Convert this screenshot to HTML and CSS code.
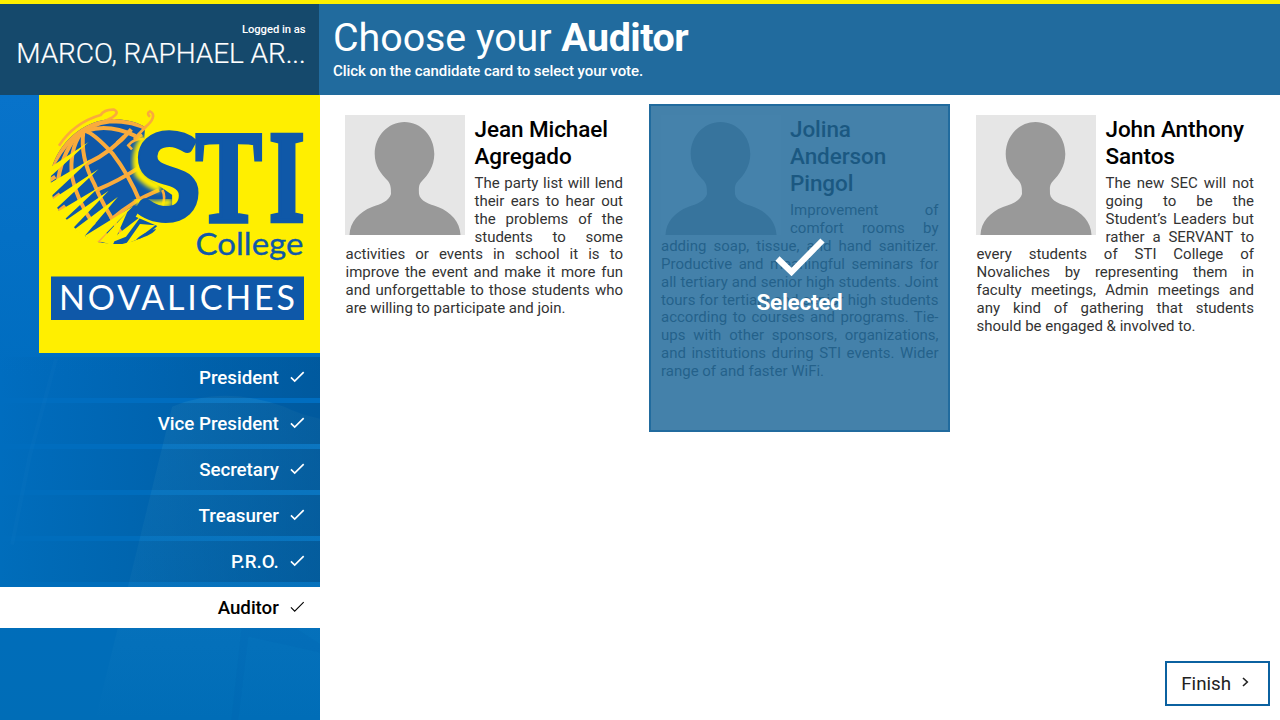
FILE: index.html
```html
<!DOCTYPE html>
<html lang="en">
<head>
<meta charset="utf-8">
<title>Choose your Auditor</title>
<link rel="stylesheet" href="styles.css">
</head>
<body>
<svg class="defs" width="0" height="0" aria-hidden="true">
  <symbol id="check" viewBox="0 0 16 12"><path d="M1 6.5 5 10.4 14.6 .9" fill="none" stroke="currentColor"/></symbol>
  <symbol id="person" viewBox="0 0 120 120">
    <path fill="#999" d="M59.500 7C76 7 89.300 21 89.300 39C89.300 51 83 60 77 66C73 70 74 74 74 79C75 86 84 89 93 92C106 97 115 107 115.500 120H4.500C5 107 14 97 27 92C36 89 44 86 46 79C46 74 46 70 43 66C36 59 29.700 51 29.700 39C29.700 21 43 7 59.500 7Z"/>
  </symbol>
</svg>
<header class="topbar">
  <div class="user"><small class="user-label">Logged in as</small><div class="user-name">MARCO, RAPHAEL AR...</div></div>
  <div class="heading"><h1 class="title">Choose your <b>Auditor</b></h1><p class="subtitle">Click on the candidate card to select your vote.</p></div>
</header>
<div class="page">
  <aside class="sidebar">
    <svg class="scene" viewBox="0 0 320 626" preserveAspectRatio="none">
      <defs><linearGradient id="beam" x1="0" y1="0" x2="0" y2="1"><stop offset="0" stop-color="#4ba5cc" stop-opacity=".18"/><stop offset=".65" stop-color="#4ba5cc" stop-opacity=".08"/><stop offset="1" stop-color="#4ba5cc" stop-opacity="0"/></linearGradient></defs>
      <path d="M172 312Q222 290 284 312Q300 320 320 324V626H95Z" fill="url(#beam)"/>
      <path d="M56 264 30 360 12 450" fill="none" stroke="#35a0d8" stroke-width="4" opacity=".06"/>
      <path d="M245 500 320 550V558L248 542 238 626H231Z" fill="#005ba4" opacity=".1"/>
    </svg>
    <div class="logo">
      <svg width="281" height="258" viewBox="0 0 281 258">
        <defs>
          <clipPath id="globe"><path d="M20 215C42 130 115 58 210 57C250 58 290 70 303 82L300 130 282 190 320 240 385 285V320L290 325 275 350 340 378Q300 420 235 432H205L160 426 122 408 98 390 75 366 48 338 30 306 20 266Z"/></clipPath>
          <filter id="soft" x="-30%" y="-30%" width="160%" height="160%"><feGaussianBlur stdDeviation="6"/></filter>
        </defs>
        <g transform="translate(5 5) scale(.3333)">
          <g clip-path="url(#globe)">
            <path fill="#0f58a8" d="M0 30H400V440H0Z"/>
            <g fill="none" stroke="#faab3c" stroke-width="12">
              <path d="M10 225Q75 75 200 62Q270 62 315 88" stroke-width="16"/>
              <path d="M122 92Q150 100 205 160Q255 225 288 305"/>
              <path d="M118 95Q108 170 150 250Q175 315 232 400"/>
              <path d="M112 98Q75 150 84 230Q98 300 150 375"/>
              <path d="M100 105Q48 170 40 260"/>
              <path d="M128 92Q195 70 275 108"/>
              <path d="M130 190Q205 155 262 88"/>
              <path d="M162 268Q220 245 290 200"/>
              <path d="M272 305Q310 285 345 270"/>
              <path d="M200 360Q235 330 275 305"/>
              <path d="M355 270Q366 290 355 320" stroke-width="8"/>
              <path d="M10 246 34 230M18 305 48 282M36 340 64 318M66 376 92 352M96 400 122 376M128 426 156 396M160 430 190 402"/>
            </g>
          </g>
          <path fill="#ffef00" d="M134 126 12 206 10 238ZM140 178 10 254 20 290ZM164 207 22 300 36 326ZM165 262 40 336 60 360ZM194 272 64 362 84 388ZM222 290 92 388 120 410ZM268 318 122 408 156 430ZM250 336 168 424 206 436ZM292 348 222 402 206 426 246 410ZM288 372 246 432 276 420 334 376Z"/>
          <path d="M45 137Q90 68 170 45Q180 28 210 29Q228 38 205 52L155 77M303 82C328 62 335 42 318 34Q306 40 318 50M308 78 270 117 295 105M218 128 240 108M300 117Q270 115 253 136L264 148" fill="none" stroke="#faab3c" stroke-width="8"/>
          <path d="M302 115Q270 165 285 220Q310 250 350 264" fill="none" stroke="#ffef00" stroke-width="28" filter="url(#soft)"/>
          <path d="M275 301Q340 325 382 304" fill="none" stroke="#ffef00" stroke-width="22" filter="url(#soft)"/>
          <path fill="#0f58a8" d="M276 419Q293 400 336 386Q330 403 276 419Z"/>
        </g>
        <text class="logo-s" transform="translate(94 125.500) scale(1.02 1)">S</text>
        <text class="logo-ti" transform="translate(156.500 125.500) scale(.76 1)">T</text>
        <text class="logo-ti" transform="translate(230 125.500) scale(.7 1)">I</text>
        <text class="logo-college" x="156.500" y="160" textLength="108" lengthAdjust="spacingAndGlyphs">College</text>
        <path fill="#0f58a8" d="M12 181.500H265V225H12Z"/>
        <text class="logo-campus" x="20" y="215" textLength="236">NOVALICHES</text>
      </svg>
    </div>
    <nav class="steps">
      <a class="step">President<svg><use href="#check"/></svg></a>
      <a class="step">Vice President<svg><use href="#check"/></svg></a>
      <a class="step">Secretary<svg><use href="#check"/></svg></a>
      <a class="step">Treasurer<svg><use href="#check"/></svg></a>
      <a class="step">P.R.O.<svg><use href="#check"/></svg></a>
      <a class="step active">Auditor<svg><use href="#check"/></svg></a>
    </nav>
  </aside>
  <main class="content">
    <section class="cards">
      <article class="card">
        <svg class="photo"><use href="#person"/></svg>
        <h2 class="name">Jean Michael Agregado</h2>
        <p class="platform">The party list will lend their ears to hear out the problems of the students to some activities or events in school it is to improve the event and make it more fun and unforgettable to those students who are willing to participate and join.</p>
      </article>
      <article class="card selected">
        <svg class="photo"><use href="#person"/></svg>
        <h2 class="name">Jolina Anderson Pingol</h2>
        <p class="platform">Improvement of comfort rooms by adding soap, tissue, and hand sanitizer. Productive and meaningful seminars for all tertiary and senior high students. Joint tours for tertiary and senior high students according to courses and programs. Tie-ups with other sponsors, organizations, and institutions during STI events. Wider range of and faster WiFi.</p>
        <div class="overlay"><svg class="bigcheck" viewBox="0 0 50 38"><path d="M2.500 20.500 16.500 34 47.500 2.500" fill="none" stroke="#fff" stroke-width="6"/></svg><span>Selected</span></div>
      </article>
      <article class="card">
        <svg class="photo"><use href="#person"/></svg>
        <h2 class="name">John Anthony Santos</h2>
        <p class="platform">The new SEC will not going to be the Student’s Leaders but rather a SERVANT to every students of STI College of Novaliches by representing them in faculty meetings, Admin meetings and any kind of gathering that students should be engaged &amp; involved to.</p>
      </article>
    </section>
    <button class="finish">Finish<svg width="7" height="10" viewBox="0 0 7 10"><path d="M1 1 5.300 5 1 9" fill="none" stroke="#222" stroke-width="1.600"/></svg></button>
  </main>
</div>
</body>
</html>
```
FILE: styles.css
```css
* { box-sizing: border-box; }
body { margin: 0; height: 720px; overflow: hidden; display: flex; flex-direction: column; background: #fff; font-family: Roboto, "Liberation Sans", sans-serif; color: #000; }
h1, h2, p { margin: 0; }
.defs { position: absolute; }
.topbar { flex: none; height: 94.5px; border-top: 4px solid #ffef00; background: #216b9e; color: #fff; display: flex; }
.user { width: 319px; background: #15496c; padding: 18.4px 13.500px 0 16px; text-align: right; }
.user-label { display: block; font-size: 11.25px; line-height: 15px; font-weight: 500; letter-spacing: -.05px; }
.user-name { font-size: 28.1px; line-height: 34px; font-weight: 300; white-space: nowrap; letter-spacing: -.12px; -webkit-text-stroke: .2px #fff; }
.heading { padding: 11px 0 0 14px; }
.title { font-size: 39.4px; line-height: 46px; font-weight: 400; white-space: nowrap; letter-spacing: -.05px; }
.title b { font-weight: 700; letter-spacing: -.5px; }
.subtitle { font-size: 15px; line-height: 20px; font-weight: 500; letter-spacing: -.06px; }
.page { flex: 1; display: flex; min-height: 0; }
.sidebar { position: relative; width: 320.3px; background: linear-gradient(#0873ca, #006dc0 45%, #006db7); display: flex; flex-direction: column; }
.scene { position: absolute; inset: 0; width: 100%; height: 100%; }
.logo { position: relative; height: 258.5px; margin-left: 39px; background: #ffef00; }
.logo svg { display: block; }
.logo-s { font: 900 122px Lato, sans-serif; fill: #0f58a8; stroke: #0f58a8; stroke-width: 2px; }
.logo-ti { font: 700 131px "Liberation Serif", serif; fill: #0f58a8; stroke: #0f58a8; stroke-width: 4.500px; }
.logo-college { font: 400 31px Lato, sans-serif; fill: #0f58a8; stroke: #0f58a8; stroke-width: .3px; }
.logo-campus { font: 400 34px Lato, sans-serif; fill: #fff; }
.steps { position: relative; margin-top: 4px; display: flex; flex-direction: column; gap: 5px; }
.step { height: 41px; padding-right: 15px; display: flex; align-items: center; justify-content: flex-end; gap: 11.5px; color: #fff; font-size: 18.75px; font-weight: 500; letter-spacing: -.04px; background: linear-gradient(90deg, rgba(0,70,130,0), rgba(0,70,125,.5)); }
.step svg { width: 15px; height: 12px; stroke-width: 1.8px; margin-top: -2px; }
.step.active { background: #fff; color: #000; }
.step.active svg { stroke-width: 1.2px; }
.content { flex: 1; display: flex; flex-direction: column; justify-content: space-between; padding: 9.5px 9.8px 14px 13.200px; }
.cards { display: flex; gap: 14.5px; }
.card { position: relative; flex: none; width: 301px; height: 328px; padding: 11px 11.500px 0 12px; }
.card.selected { background: #e0e0e0; }
.photo { float: left; width: 120px; height: 120px; margin-right: 9px; background: #e6e6e6; }
.name { position: relative; top: .7px; font-size: 22.5px; line-height: 27.3px; font-weight: 500; letter-spacing: -.08px; }
.platform { margin-top: 5.6px; font-size: 15px; line-height: 17.81px; text-align: justify; color: #333; }
.overlay { position: absolute; inset: 0; border: 2px solid #216b9e; background: rgba(33,107,158,.82); display: flex; flex-direction: column; align-items: center; justify-content: center; gap: 12px; color: #fff; font-size: 22.5px; line-height: 28px; font-weight: 700; letter-spacing: -.3px; padding-top: 18px; }
.bigcheck { width: 50px; height: 38px; margin-left: 2px; }
.finish { align-self: flex-end; width: 105px; height: 45px; border: 2px solid #0b61a0; background: #fff; font: 400 18.75px Roboto, sans-serif; color: #222; display: flex; align-items: center; justify-content: flex-start; gap: 11px; padding: 0 0 0 14px; }
.finish svg { margin-top: -3px; }
```
